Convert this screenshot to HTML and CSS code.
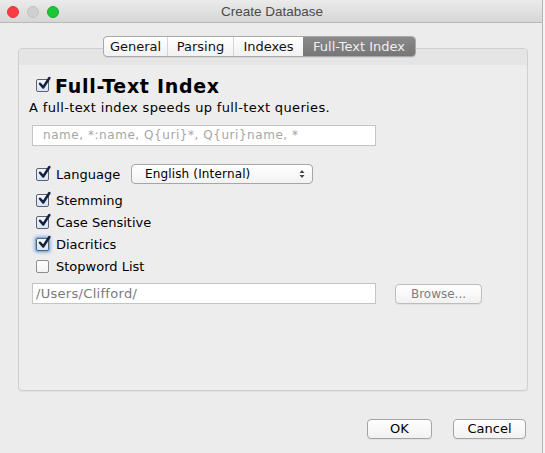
FILE: index.html
```html
<!DOCTYPE html>
<html>
<head>
<meta charset="utf-8">
<link rel="stylesheet" href="styles.css">
</head>
<body>
<div class="window">
  <div class="titlebar">
    <div class="lights">
      <span class="light red"></span>
      <span class="light gray"></span>
      <span class="light green"></span>
    </div>
    <div class="title">Create Database</div>
  </div>
  <div class="content">
    <div class="tabs">
      <div class="tab">General</div>
      <div class="tab">Parsing</div>
      <div class="tab">Indexes</div>
      <div class="tab active">Full-Text Index</div>
    </div>
    <div class="panel">
      <div class="band"></div>
      <div class="panel-body">
        <label class="check heading">
          <span class="box checked"><svg viewBox="0 0 16 16"><path d="M3.2 8.3 L6.6 12.2 L13.2 2.2" fill="none" stroke="#17203f" stroke-width="2.7" stroke-linecap="round" stroke-linejoin="round"/></svg></span>
          <span class="heading-text">Full-Text Index</span>
        </label>
        <div class="desc">A full-text index speeds up full-text queries.</div>
        <div class="field wide placeholder">name, *:name, Q{uri}*, Q{uri}name, *</div>
        <div class="options">
          <div class="lang-row">
            <label class="check">
              <span class="box checked"><svg viewBox="0 0 16 16"><path d="M3.2 8.3 L6.6 12.2 L13.2 2.2" fill="none" stroke="#17203f" stroke-width="2.7" stroke-linecap="round" stroke-linejoin="round"/></svg></span>
              <span>Language</span>
            </label>
            <div class="select">
              <span>English (Internal)</span>
              <svg class="arrows" viewBox="0 0 8 12"><path d="M1.5 5 L4 2 L6.5 5 Z M1.5 7 L4 10 L6.5 7 Z" fill="#444"/></svg>
            </div>
          </div>
          <label class="check">
            <span class="box checked"><svg viewBox="0 0 16 16"><path d="M3.2 8.3 L6.6 12.2 L13.2 2.2" fill="none" stroke="#17203f" stroke-width="2.7" stroke-linecap="round" stroke-linejoin="round"/></svg></span>
            <span>Stemming</span>
          </label>
          <label class="check">
            <span class="box checked"><svg viewBox="0 0 16 16"><path d="M3.2 8.3 L6.6 12.2 L13.2 2.2" fill="none" stroke="#17203f" stroke-width="2.7" stroke-linecap="round" stroke-linejoin="round"/></svg></span>
            <span>Case Sensitive</span>
          </label>
          <label class="check">
            <span class="box checked focus"><svg viewBox="0 0 16 16"><path d="M3.2 8.3 L6.6 12.2 L13.2 2.2" fill="none" stroke="#17203f" stroke-width="2.7" stroke-linecap="round" stroke-linejoin="round"/></svg></span>
            <span>Diacritics</span>
          </label>
          <label class="check">
            <span class="box"></span>
            <span>Stopword List</span>
          </label>
        </div>
        <div class="path-row">
          <div class="field wide path">/Users/Clifford/</div>
          <div class="button disabled browse">Browse...</div>
        </div>
      </div>
    </div>
    <div class="buttons">
      <div class="button ok">OK</div>
      <div class="button cancel">Cancel</div>
    </div>
  </div>
</div>
</body>
</html>
```

FILE: styles.css
```css
* { box-sizing: border-box; }
html, body { margin: 0; padding: 0; }
body {
  background: #f4f4f4;
  width: 545px;
  height: 453px;
  overflow: hidden;
  font-family: "DejaVu Sans", "Liberation Sans", sans-serif;
  font-size: 13px;
  color: #000;
}
.window {
  width: 543px;
  height: 453px;
  background: #ececec;
  border-right: 1px solid #b4b4b4;
  display: flex;
  flex-direction: column;
}
.titlebar {
  height: 23px;
  flex: none;
  background: linear-gradient(#ebebeb, #d6d6d6);
  border-bottom: 1px solid #b9b9b9;
  display: flex;
  align-items: center;
  position: relative;
}
.lights {
  display: flex;
  gap: 8px;
  padding-left: 7px;
  padding-top: 1px;
}
.light {
  width: 12px;
  height: 12px;
  border-radius: 50%;
  display: block;
}
.light.red { background: #fc3b43; border: 1px solid #e2343b; }
.light.gray { background: #d0d0d0; border: 1px solid #c2c2c2; }
.light.green { background: #1bc638; border: 1px solid #16ad2e; }
.title {
  position: absolute;
  left: 0;
  right: 0;
  top: 4px;
  text-align: center;
  font-family: "Liberation Sans", Arial, sans-serif;
  font-size: 13.5px;
  color: #4b4b4b;
  padding-left: 2px;
}
.content {
  flex: 1;
  display: flex;
  flex-direction: column;
  padding: 13px 0 0 18px;
}
.tabs {
  margin-left: 85px;
  display: flex;
  height: 21px;
  width: 313px;
  border: 1px solid #a9a9a9;
  border-radius: 4px;
  background: linear-gradient(#ffffff, #f1f1f1);
  position: relative;
  z-index: 2;
  overflow: hidden;
  box-shadow: 0 1px 0 rgba(0,0,0,0.06);
}
.tab {
  font-size: 13px;
  line-height: 19px;
  text-align: center;
  color: #111;
  border-right: 1px solid #d6d6d6;
}
.tab:nth-child(1) { width: 64px; }
.tab:nth-child(2) { width: 66px; }
.tab:nth-child(3) { width: 69px; border-right: none; }
.tab.active {
  flex: 1;
  background: linear-gradient(#8a8a8a, #767676);
  color: #f0f0f0;
  border-right: none;
}
.panel {
  margin-top: -9px;
  width: 510px;
  height: 343px;
  border: 1px solid #cfcfcf;
  border-radius: 4px;
  background: #ededed;
  display: flex;
  flex-direction: column;
  box-shadow: 0 1px 1px rgba(0,0,0,0.05);
}
.band {
  height: 16px;
  flex: none;
  background: #e5e5e5;
  border-radius: 3px 3px 0 0;
}
.panel-body {
  padding: 8px 0 0 10px;
  display: flex;
  flex-direction: column;
}
.check {
  display: flex;
  align-items: center;
  gap: 7px;
  height: 22px;
  padding-left: 7px;
}
.box {
  width: 13px;
  height: 13px;
  border: 1px solid #8d8d8d;
  border-radius: 2px;
  background: linear-gradient(#ffffff, #f3f3f3);
  position: relative;
  flex: none;
}
.box.checked {
  background: linear-gradient(#f4f8fd, #d8e5f5);
  border-color: #5b6270;
}
.box.focus {
  box-shadow: 0 0 0 1px #86b0ee, 0 0 3px 2px rgba(110, 160, 235, 0.65);
}
.box svg {
  position: absolute;
  left: -0.5px;
  top: -4px;
  width: 15px;
  height: 15px;
}
.heading {
  height: 25px;
  gap: 6px;
}
.heading-text {
  font-weight: bold;
  font-size: 19px;
  letter-spacing: 0.7px;
}
.desc {
  margin-top: 1px;
  height: 18px;
  line-height: 18px;
  letter-spacing: 0.35px;
}
.field {
  background: #fff;
  border: 1px solid #c4c4c4;
  height: 21px;
  line-height: 19px;
  padding-left: 8px;
  font-size: 12px;
}
.field.wide {
  width: 344px;
  margin-left: 3px;
}
.placeholder {
  margin-top: 8px;
  color: #a6a6a6;
  padding-left: 10px;
  letter-spacing: 0.55px;
}
.options {
  margin-top: 17px;
  display: flex;
  flex-direction: column;
}
.lang-row {
  display: flex;
  align-items: center;
  height: 22px;
  margin-bottom: 4px;
}
.lang-row .check { width: 102px; flex: none; }
.select {
  width: 182px;
  height: 20px;
  border: 1px solid #a6a6a6;
  border-radius: 4px;
  background: linear-gradient(#ffffff, #f2f2f2);
  display: flex;
  align-items: center;
  justify-content: space-between;
  padding: 0 6px 0 13px;
  font-size: 12px;
  letter-spacing: 0.15px;
}
.arrows { width: 8px; height: 12px; }
.path-row {
  margin-top: 6px;
  display: flex;
  align-items: center;
  gap: 19px;
}
.path {
  color: #7a7a7a;
  padding-left: 3px;
  font-size: 13px;
  letter-spacing: 0.3px;
  height: 21px;
}
.button {
  height: 20px;
  border: 1px solid #a4a4a4;
  border-radius: 4px;
  background: linear-gradient(#ffffff, #f1f1f1);
  text-align: center;
  line-height: 18px;
  font-size: 13px;
  box-shadow: 0 1px 0 rgba(0,0,0,0.05);
}
.button.disabled {
  color: #7e7e7e;
  border-color: #bdbdbd;
  font-size: 12px;
}
.browse { width: 87px; }
.buttons {
  margin-top: 28px;
  display: flex;
  justify-content: flex-end;
  gap: 21px;
  padding-right: 16px;
}
.ok { width: 65px; }
.cancel { width: 73px; }
```
